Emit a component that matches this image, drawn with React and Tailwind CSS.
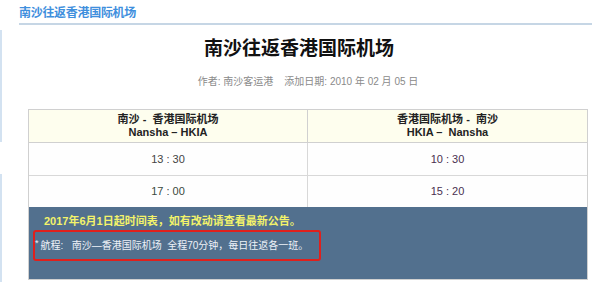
export default function App() {
  const font = { fontFamily: '"Liberation Sans", "Noto Sans CJK SC", sans-serif' };
  return (
    <div className="w-[592px] h-[292px] bg-white flex overflow-hidden" style={font}>
      <div className="w-[2px] flex flex-col shrink-0">
        <div className="h-[30px]" />
        <div className="h-[112px] bg-[#d3e2f1]" />
        <div className="h-[32px]" />
        <div className="h-[108px] bg-[#d3e2f1]" />
      </div>
      <div className="flex-1 flex flex-col">
        <div className="pl-[17px] pt-[5px]">
          <div className="text-[12px] leading-[16px] font-bold text-[#3f8fdd] tracking-[-0.3px]">南沙往返香港国际机场</div>
          <div className="mt-[2px] h-[2px] bg-[#c6d6e5]" />
        </div>
        <div className="text-center mt-[12px] text-[19px] leading-[24px] font-bold text-[#111] pl-[4px]">南沙往返香港国际机场</div>
        <div className="text-center mt-[14px] text-[10px] leading-[13px] text-[#8a8a8a] pl-[22px] whitespace-nowrap">
          作者: 南沙客运港&nbsp;&nbsp;&nbsp;&nbsp;添加日期: 2010 年 02 月 05 日
        </div>
        <div className="ml-[26px] mt-[21px] w-[560px] border border-[#d0d0d0]">
          <div className="grid grid-cols-2 bg-[#fefeee] h-[33px] border-b border-[#d0d0d0]">
            <div className="border-r border-[#d0d0d0] flex flex-col items-center justify-center text-[11px] leading-[13px] font-bold text-[#222]">
              <div>南沙 -&nbsp;&nbsp;香港国际机场</div>
              <div>Nansha – HKIA</div>
            </div>
            <div className="flex flex-col items-center justify-center text-[11px] leading-[13px] font-bold text-[#222]">
              <div>香港国际机场 -&nbsp;&nbsp;南沙</div>
              <div>HKIA –&nbsp;&nbsp;Nansha</div>
            </div>
          </div>
          <div className="grid grid-cols-2 h-[33px] border-b border-[#d8d8d8] bg-[#fefefe]">
            <div className="border-r border-[#d8d8d8] flex items-center justify-center text-[11px] text-[#444]">13 : 30</div>
            <div className="flex items-center justify-center text-[11px] text-[#4a3050]">10 : 30</div>
          </div>
          <div className="grid grid-cols-2 h-[31px] bg-[#fefefe]">
            <div className="border-r border-[#d8d8d8] flex items-center justify-center text-[11px] text-[#3a4a40]">17 : 00</div>
            <div className="flex items-center justify-center text-[11px] text-[#4a3050]">15 : 20</div>
          </div>
          <div className="bg-[#52708e] h-[72px] pt-[7px]">
            <div className="pl-[15px] text-[11px] leading-[15px] font-bold text-[#f3f36a] whitespace-nowrap">2017年6月1日起时间表，如有改动请查看最新公告。</div>
            <div className="mt-[1px] ml-[4px] w-[288px] h-[31px] border-2 border-[#e0201c] rounded-[3px] flex items-center text-[10px] text-[#eef2f8] whitespace-nowrap">
              <span className="text-[9px] self-start mt-[5px]">*</span>
              <span className="ml-[2px]">航程:&nbsp;&nbsp;&nbsp;南沙—香港国际机场&nbsp;&nbsp;全程70分钟，每日往返各一班。</span>
            </div>
          </div>
        </div>
      </div>
    </div>
  );
}
